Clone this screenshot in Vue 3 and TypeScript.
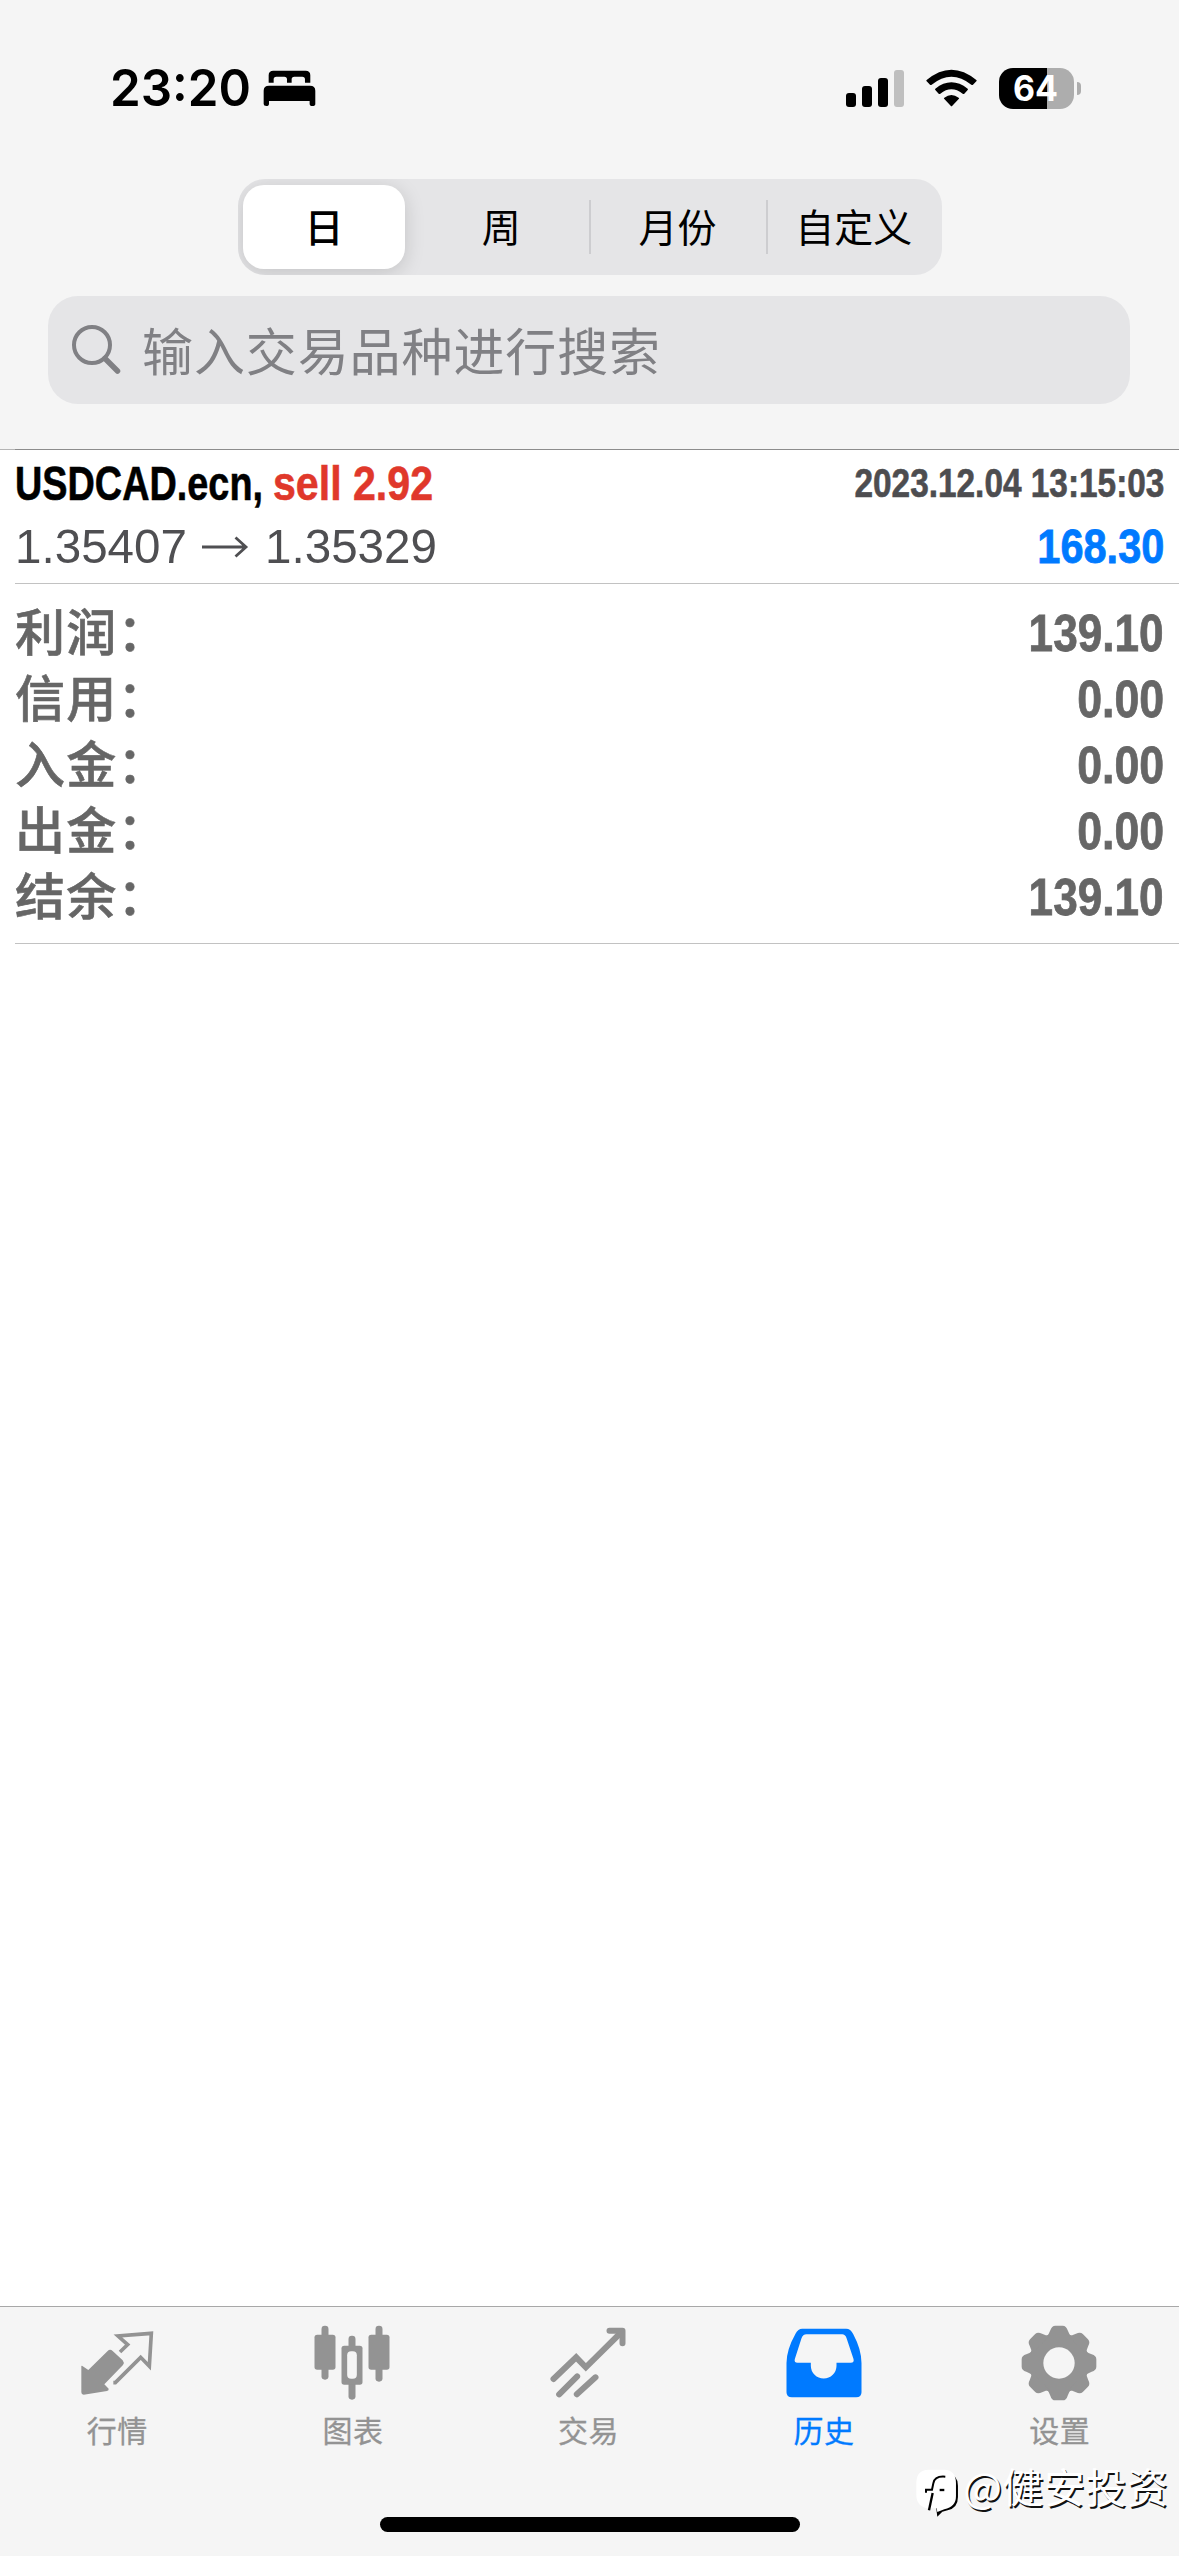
<script setup lang="ts">
import { ref } from 'vue'

interface SummaryRow {
  label: string
  value: string
  width: number
}

interface Tab {
  id: string
  label: string
  box: string
}

const periods: string[] = ['日', '周', '月份', '自定义']
const activePeriod = ref(0)

const summary: SummaryRow[] = [
  { label: '利润：', value: '139.10', width: 135 },
  { label: '信用：', value: '0.00', width: 87 },
  { label: '入金：', value: '0.00', width: 87 },
  { label: '出金：', value: '0.00', width: 87 },
  { label: '结余：', value: '139.10', width: 135 },
]

const tabs: Tab[] = [
  { id: 'quotes', label: '行情', box: '231 100 240 240' },
  { id: 'chart', label: '图表', box: '937.5 100 240 240' },
  { id: 'trade', label: '交易', box: '145.5 100 240 240' },
  { id: 'history', label: '历史', box: '850.5 100 240 240' },
  { id: 'settings', label: '设置', box: '418.5 100 240 240' },
]
const activeTab = ref('history')
const teeth: number[] = [0, 45, 90, 135, 180, 225, 270, 315]

// Condenses a text run horizontally to the given width in pixels.
const vFit = {
  mounted(el: HTMLElement, binding: { value: number }) {
    const natural = el.getBoundingClientRect().width
    el.style.transform = `scaleX(${binding.value / natural})`
    if (el.classList.contains('end')) {
      el.style.marginLeft = `${binding.value - natural}px`
    } else {
      el.style.marginRight = `${binding.value - natural}px`
    }
  },
}
</script>

<template>
  <div class="screen">
    <header class="top">
      <div class="status">
        <span v-fit="141" class="clock">23:20</span>
        <svg class="bed" viewBox="520 60 160 110" width="53.3" height="36.7">
          <path d="M537 98V76Q537 62 551 62H648Q662 62 662 76V98H646V88Q646 80 638 80H614Q606 80 606 88V98H592V88Q592 80 584 80H560Q552 80 552 88V98Z" />
          <path d="M522 122Q522 107 538 107H661Q677 107 677 122V162Q677 168 668 168Q660 168 660 161V153H538V161Q538 168 530 168Q522 168 522 162Z" />
        </svg>
        <div class="grow"></div>
        <svg class="signal" viewBox="0 0 58 37" width="58" height="37">
          <rect x="0" y="23" width="10" height="14" rx="3" />
          <rect x="16" y="16" width="10" height="21" rx="3" />
          <rect x="32" y="8" width="10" height="29" rx="3" />
          <rect x="48" y="0" width="10" height="37" rx="3" fill="#bfbfbf" />
        </svg>
        <svg class="wifi" viewBox="318 55 153 113" width="51" height="37.7">
          <path d="M320 88Q394 26 469 88Q471 90 469 92L459 102Q457 104 454 102Q394 54 335 102Q332 104 330 102L320 92Q318 90 320 88Z" />
          <path d="M346 114Q394 76 443 114Q445 116 443 118L433 129Q431 131 428 129Q394 103 361 129Q358 131 356 129L346 118Q344 116 346 114Z" />
          <path d="M373 141Q394 125 416 141Q419 143 416 145L397 165Q394 168 392 165L373 145Q370 143 373 141Z" />
        </svg>
        <div class="battery"><span v-fit="45">64</span></div>
        <div class="nub"></div>
      </div>

      <div class="segments">
        <button
          v-for="(p, i) in periods"
          :key="p"
          :class="['segment', { active: i === activePeriod, ruled: i > 1 }]"
          @click="activePeriod = i"
        >
          <span>{{ p }}</span>
        </button>
      </div>

      <div class="search">
        <svg viewBox="0 0 50 52" width="50" height="52" fill="none" stroke="#808084">
          <circle cx="21" cy="21" r="18" stroke-width="4" />
          <path d="M34 34.500L46.500 47" stroke-width="5.500" stroke-linecap="round" />
        </svg>
        <span>输入交易品种进行搜索</span>
      </div>
      <div class="rule"></div>
    </header>

    <main>
      <section class="deal">
        <div class="line first">
          <span v-fit="248" class="symbol">USDCAD.ecn,</span>
          <span v-fit="160" class="side">sell 2.92</span>
          <div class="grow"></div>
          <span v-fit="310" class="date end">2023.12.04 13:15:03</span>
        </div>
        <div class="line second">
          <span v-fit="172" class="price">1.35407</span>
          <svg class="arrow" viewBox="0 0 48 24" width="48" height="24" fill="none" stroke="#4f4f52">
            <path d="M1 12H45M34.500 2.500L45 12L34.500 21.500" stroke-width="2.800" />
          </svg>
          <span v-fit="172" class="price">1.35329</span>
          <div class="grow"></div>
          <span v-fit="127" class="profit end">168.30</span>
        </div>
      </section>

      <section class="summary">
        <div v-for="row in summary" :key="row.label" class="total">
          <span class="label">{{ row.label }}</span>
          <span v-fit="row.width" class="value end">{{ row.value }}</span>
        </div>
      </section>
    </main>

    <footer>
      <nav>
        <a v-for="tab in tabs" :key="tab.id" :class="{ on: tab.id === activeTab }" @click="activeTab = tab.id">
          <svg :viewBox="tab.box" width="80" height="80" fill="currentColor">
            <g v-if="tab.id === 'quotes'">
              <path d="M246 228L265 241L323 184Q330 177 338 184L368 212Q374 219 369 226L313 284L326 297Q327 302 321 304L251 315Q244 315 244 308V229Z" />
              <path
                d="M360 187L383 165L354 139L454 131L448 230L422 203L346 279H340"
                fill="none"
                stroke="currentColor"
                stroke-width="11"
              />
            </g>
            <g v-else-if="tab.id === 'chart'">
              <rect x="945" y="135" width="63" height="105" rx="8" />
              <rect x="966" y="108" width="21" height="162" rx="10" />
              <rect x="1107" y="135" width="63" height="105" rx="8" />
              <rect x="1128" y="108" width="21" height="168" rx="10" />
              <rect x="1047" y="138" width="21" height="192" rx="10" />
              <rect x="1026" y="168" width="63" height="117" rx="8" />
              <rect x="1043" y="185" width="29" height="82" rx="12" fill="#f5f5f5" />
            </g>
            <g v-else-if="tab.id === 'trade'" fill="none" stroke="currentColor" stroke-width="18" stroke-linecap="round">
              <path d="M162 268L230 203L259 233L366 127" stroke-linejoin="miter" />
              <path d="M330 123H369V161" stroke-linejoin="round" />
              <path d="M179 314L233 260M232 314L288 263" />
            </g>
            <path
              v-else-if="tab.id === 'history'"
              fill-rule="evenodd"
              d="M905 117H1037Q1050 117 1058 133Q1083 180 1083 220V308Q1083 323 1067 323H874Q858 323 858 308V220Q858 180 885 132Q893 117 905 117ZM918 134Q907 134 903 146L883 208Q880 219 891 219H931V228A38.500 38.500 0 0 0 1008 228V219H1051Q1062 219 1059 208L1038 145Q1034 134 1025 134Z"
            />
            <g v-else transform="translate(538.5 220)">
              <circle r="90" />
              <path
                v-for="angle in teeth"
                :key="angle"
                :transform="`rotate(${angle})`"
                d="M-38 -78Q-30 -86 -26 -98Q-22 -112 -11 -112H11Q22 -112 26 -98Q30 -86 38 -78Z"
              />
              <circle r="47" fill="#f5f5f5" />
            </g>
          </svg>
          <span>{{ tab.label }}</span>
        </a>
      </nav>
      <div class="home"></div>
    </footer>

    <div class="watermark">
      <svg viewBox="110 535 130 150" width="43.300" height="50">
        <path d="M205 550Q236 556 236 588V622Q236 655 205 662L189 666L174 681L170 650L200 640Z" fill="#000" />
        <path d="M148 540H195Q230 541 230 580V620Q230 652 195 659L174 667L172 656H148Q111 652 111 615V580Q111 541 148 540Z" fill="#fff" />
        <path d="M198 561Q166 558 162 581L158 600H140V609" fill="none" stroke="#000" stroke-width="6" />
        <path d="M160 610L149 662" fill="none" stroke="#000" stroke-width="7" />
        <path d="M181 601H195" stroke="#000" stroke-width="7" />
      </svg>
      <span>@健安投资</span>
    </div>
  </div>
</template>

<style>
body {
  margin: 0;
  background: #fff;
}
</style>

<style scoped>
.screen {
  position: relative;
  display: flex;
  flex-direction: column;
  width: 1179px;
  height: 2556px;
  overflow: hidden;
  background: #fff;
  font-family: 'Liberation Sans', 'Noto Sans CJK SC', sans-serif;
}
.grow {
  flex: 1;
}
.top {
  display: flex;
  flex-direction: column;
  height: 450px;
  background: #f5f5f5;
}
.status {
  display: flex;
  align-items: center;
  box-sizing: border-box;
  height: 179px;
  padding: 0 98px 3px 110px;
}
.status span,
.line span,
.value {
  display: inline-block;
  transform-origin: 0 50%;
  white-space: nowrap;
}
.status span.end,
.line span.end,
.value.end {
  transform-origin: 100% 50%;
}
.clock {
  font: 600 51px/60px Inter, sans-serif;
}
.bed {
  margin-left: 12px;
}
.wifi {
  margin-left: 22px;
}
.battery {
  box-sizing: border-box;
  width: 75px;
  height: 41px;
  margin-left: 22px;
  padding-left: 14px;
  border-radius: 14px;
  background: linear-gradient(90deg, #000 48px, #adadad 48px);
  color: #fff;
  font: 700 35px/41px Inter, sans-serif;
}
.nub {
  width: 4px;
  height: 13px;
  margin-left: 3px;
  border-radius: 0 5px 5px 0;
  background: #adadad;
}
.segments {
  display: flex;
  box-sizing: border-box;
  width: 704px;
  height: 96px;
  margin-left: 238px;
  border-radius: 27px;
  background: #e5e5e7;
  overflow: hidden;
}
.segment {
  display: flex;
  flex: 1 1 0;
  align-items: center;
  justify-content: center;
  box-sizing: border-box;
  padding: 0 0 4px;
  border: 0;
  background: none;
  color: #000;
  font: 400 39px/50px 'Noto Sans CJK SC', sans-serif;
}
.segment span {
  white-space: nowrap;
}
.segment.ruled {
  background: linear-gradient(#cdcdd0, #cdcdd0) 0 21px / 2px 54px no-repeat;
}
.segment.active {
  flex: none;
  width: 162px;
  height: 84px;
  margin: 6px 8px 6px 5px;
  border-radius: 21px;
  background: #fff;
  box-shadow: 0 4px 20px rgba(0, 0, 0, 0.15);
  font-weight: 500;
}
.search {
  display: flex;
  align-items: center;
  width: 1082px;
  height: 108px;
  margin: 21px 0 0 48px;
  border-radius: 30px;
  background: #e5e5e7;
  color: #808084;
  font: 400 51px/70px 'Noto Sans CJK SC', sans-serif;
  letter-spacing: 0.9px;
}
.search svg {
  margin: 0 21px 0 23px;
}
.search span {
  padding-bottom: 3px;
}
.rule {
  height: 1px;
  margin-top: 45px;
  background: linear-gradient(90deg, #b5b5b5 15px, #8c8c8c 15px);
}
main {
  flex: 1;
}
.deal,
.summary {
  box-sizing: border-box;
  margin-left: 15px;
  border-bottom: 1px solid #c2c2c2;
}
.deal {
  height: 134px;
}
.line {
  display: flex;
  align-items: center;
  height: 63px;
  line-height: 63px;
  padding-right: 15px;
}
.first {
  padding-top: 2px;
}
.symbol,
.side {
  font-weight: 700;
  font-size: 49px;
  -webkit-text-stroke: 0.6px;
}
.side {
  margin-left: 10px;
  color: #e0382b;
}
.date {
  color: #4d4d50;
  font-weight: 700;
  font-size: 40px;
  -webkit-text-stroke: 0.6px;
}
.price {
  color: #4f4f52;
  font-size: 49px;
}
.arrow {
  margin: 0 16px 0 14px;
}
.profit {
  color: #007aff;
  font-weight: 700;
  font-size: 48.5px;
  -webkit-text-stroke: 0.8px;
}
.summary {
  height: 360px;
  padding: 16px 15px 0 0;
}
.total {
  display: flex;
  justify-content: space-between;
  height: 66px;
  line-height: 66px;
  color: #666;
}
.label {
  font: 500 50px/58px 'Noto Sans CJK SC', sans-serif;
  letter-spacing: 1.2px;
  -webkit-text-stroke: 0.6px;
}
.value {
  font-weight: 700;
  font-size: 52.5px;
  -webkit-text-stroke: 0.8px;
}
footer {
  display: flex;
  flex-direction: column;
  box-sizing: border-box;
  height: 250px;
  border-top: 1px solid #a8a8a8;
  background: #f5f5f5;
}
nav {
  display: flex;
  width: 1178px;
  height: 210px;
  margin-left: -1px;
}
nav a {
  display: flex;
  flex: 1 1 0;
  flex-direction: column;
  align-items: center;
  padding-top: 16px;
  color: #939393;
  font: 400 30px/40px 'Noto Sans CJK SC', sans-serif;
}
nav a span {
  margin-top: 6px;
  padding-left: 1px;
  letter-spacing: 0.5px;
  -webkit-text-stroke: 0.3px;
}
nav a.on {
  color: #007aff;
}
.home {
  align-self: center;
  width: 420px;
  height: 15px;
  border-radius: 8px;
  background: #000;
}
.watermark {
  position: absolute;
  left: 916px;
  top: 2468px;
  display: flex;
  align-items: flex-start;
  color: #fff;
  font: 400 41px/42px 'Noto Sans CJK SC', sans-serif;
  text-shadow: 1.5px 1.5px 0 #111;
}
.watermark span {
  margin: -4px 0 0 4px;
  letter-spacing: 0.5px;
  white-space: nowrap;
}
</style>
